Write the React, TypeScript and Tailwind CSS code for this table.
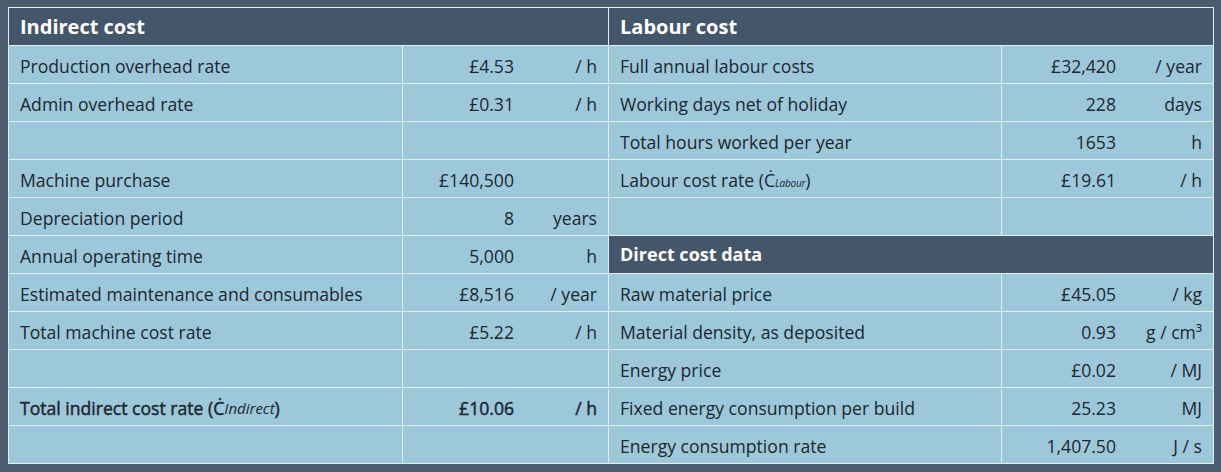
type Row =
    | { kind: "head"; title: string }
    | { kind: "row"; label?: React.ReactNode; value?: string; unit?: React.ReactNode; strong?: boolean };

const indirect: Row[] = [
    {kind: "head", title: "Indirect cost"},
    {kind: "row", label: "Production overhead rate", value: "£4.53", unit: "/ h"},
    {kind: "row", label: "Admin overhead rate", value: "£0.31", unit: "/ h"},
    {kind: "row"},
    {kind: "row", label: "Machine purchase", value: "£140,500"},
    {kind: "row", label: "Depreciation period", value: "8", unit: "years"},
    {kind: "row", label: "Annual operating time", value: "5,000", unit: "h"},
    {kind: "row", label: "Estimated maintenance and consumables", value: "£8,516", unit: "/ year"},
    {kind: "row", label: "Total machine cost rate", value: "£5.22", unit: "/ h"},
    {kind: "row"},
    {
        kind: "row",
        strong: true,
        label: <>Total indirect cost rate (Ċ<span className="italic text-[15px] [-webkit-text-stroke:0px]">Indirect</span>)</>,
        value: "£10.06",
        unit: "/ h",
    },
    {kind: "row"},
];

const labour: Row[] = [
    {kind: "head", title: "Labour cost"},
    {kind: "row", label: "Full annual labour costs", value: "£32,420", unit: "/ year"},
    {kind: "row", label: "Working days net of holiday", value: "228", unit: "days"},
    {kind: "row", label: "Total hours worked per year", value: "1653", unit: "h"},
    {
        kind: "row",
        label: <>Labour cost rate (Ċ<sub className="italic text-[10px] tracking-tight">Labour</sub>)</>,
        value: "£19.61",
        unit: "/ h",
    },
    {kind: "row"},
    {kind: "head", title: "Direct cost data"},
    {kind: "row", label: "Raw material price", value: "£45.05", unit: "/ kg"},
    {kind: "row", label: "Material density, as deposited", value: "0.93", unit: "g / cm³"},
    {kind: "row", label: "Energy price", value: "£0.02", unit: "/ MJ"},
    {kind: "row", label: "Fixed energy consumption per build", value: "25.23", unit: "MJ"},
    {kind: "row", label: "Energy consumption rate", value: "1,407.50", unit: "J / s"},
];

function Section({rows, cols, valueW}: { rows: Row[]; cols: string; valueW: string }) {
    return (
        <div className={`grid ${cols} grid-rows-[repeat(12,37px)] gap-px`}>
            {rows.map((r, i) =>
                r.kind === "head" ? (
                    <div
                        key={i}
                        className={`col-span-2 flex items-center bg-[#44576a] px-[11px] text-white font-bold ${i === 0 ? "text-[20px]" : "text-[18px]"}`}
                    >
                        {r.title}
                    </div>
                ) : (
                    <Cells key={i} row={r} valueW={valueW}/>
                )
            )}
        </div>
    );
}

function Cells({row, valueW}: { row: Extract<Row, { kind: "row" }>; valueW: string }) {
    // bold-ish row, the font has no medium weight so a thin stroke fakes it
    const weight = row.strong ? "[-webkit-text-stroke:0.45px_#1c2730]" : "";
    return (
        <>
            <div className={`flex items-center bg-[#9dc8da] px-[11px] pt-[3px] ${weight}`}>{row.label}</div>
            <div className={`flex items-center bg-[#9dc8da] pt-[3px] ${weight}`}>
                <span className={`${valueW} text-right`}>{row.value}</span>
                <span className="flex-1 text-right pr-[11px]">{row.unit}</span>
            </div>
        </>
    );
}

export default function App() {
    return (
        <div
            className="w-[1221px] h-[472px] bg-[#4a5d6e] pt-[7px] pl-[8px] text-[17.6px] text-[#1c2730]"
            style={{fontFamily: '"Open Sans", "Noto Sans", sans-serif'}}
        >
            <div className="flex w-[1206px] gap-px bg-[#e4eef2] p-px">
                <Section rows={indirect} cols="grid-cols-[393px_205px]" valueW="w-[111px]"/>
                <Section rows={labour} cols="grid-cols-[392px_211px]" valueW="w-[114px]"/>
            </div>
        </div>
    );
}
